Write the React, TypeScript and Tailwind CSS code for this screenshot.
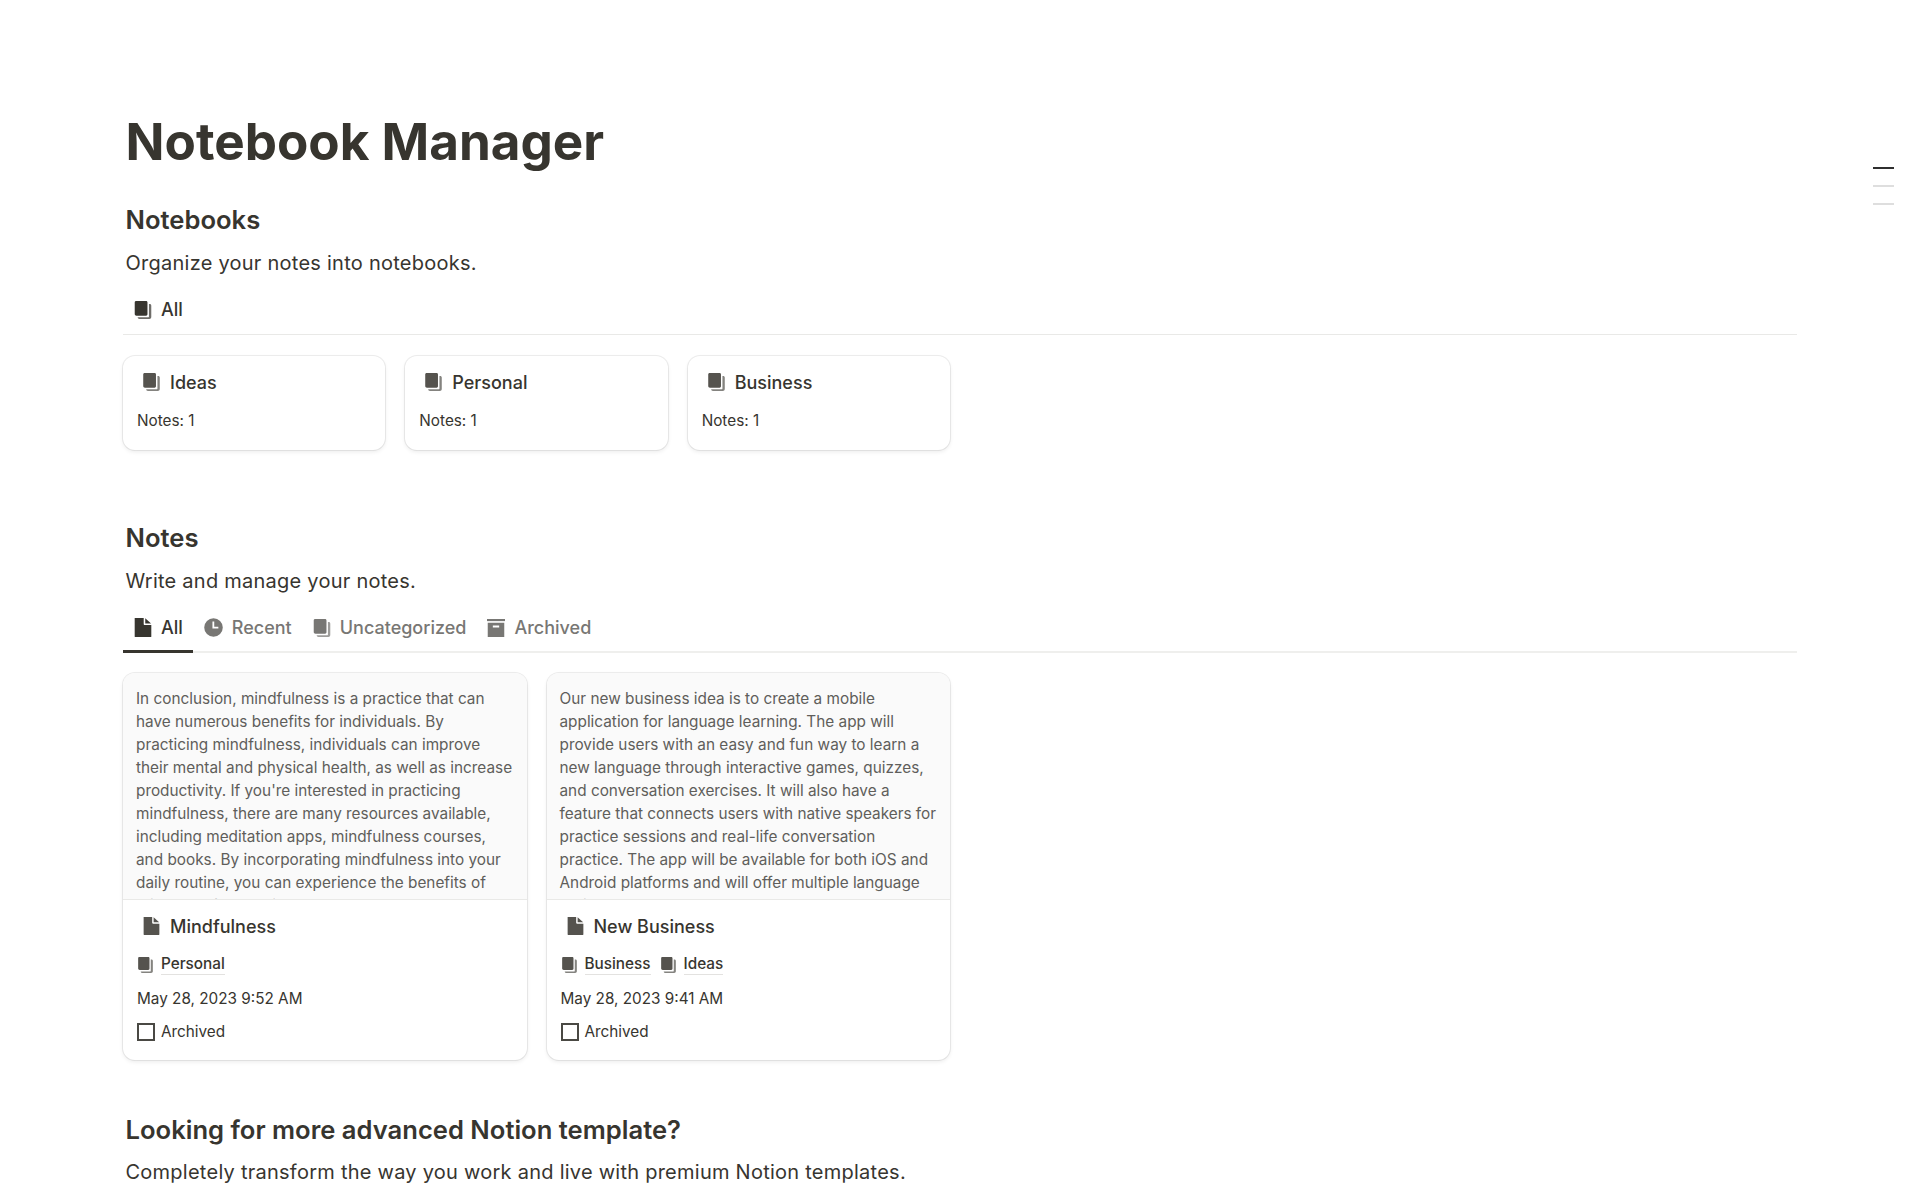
import type { ReactNode } from "react";

const INK = "#37352f";

function NotebookIcon({ className = "", fill = INK }: { className?: string; fill?: string }) {
  return (
    <svg viewBox="0 0 17 18.500" className={className} fill={fill}>
      <path d="M0 1.500C0 .6.6 0 1.500 0h10.200c.8 0 1.400.6 1.400 1.500v12.200c0 .8-.6 1.400-1.400 1.400H1.800C.8 15.100 0 14.400 0 13.400z" />
      <path
        d="M14.600 3h.9c.8 0 1.500.7 1.500 1.500v12c0 1.100-.9 2-2 2H4.800c-1 0-1.700-.6-1.800-1.700h11.100c.3 0 .5-.2.500-.5z"
        opacity="0.72"
      />
    </svg>
  );
}

function DocIcon({ className = "", fill = INK }: { className?: string; fill?: string }) {
  return (
    <svg viewBox="1.500 0.500 15.300 17.500" className={className} fill={fill}>
      <path d="M1.500 0.500h8.300v5.600c0 .5.4.9.9.9h6.100v10.500c0 .3-.2.5-.5.5H2c-.3 0-.5-.2-.5-.5z" />
      <path d="M11.200.7l5.400 4.900h-5.400z" />
    </svg>
  );
}

function ClockIcon({ className = "", fill = INK }: { className?: string; fill?: string }) {
  return (
    <svg viewBox="0 0 18 18" className={className} fill={fill}>
      <path
        fillRule="evenodd"
        d="M9 .2a8.800 8.800 0 1 1 0 17.600A8.800 8.800 0 0 1 9 .2zM8 3.400v6.500h5.600V8.300H9.700V3.400z"
      />
    </svg>
  );
}

function ArchiveIcon({ className = "", fill = INK }: { className?: string; fill?: string }) {
  return (
    <svg viewBox="0.500 1 17 17" className={className} fill={fill}>
      <rect x="0.500" y="1" width="17" height="2" />
      <path fillRule="evenodd" d="M1.200 4.500h15.600V18H1.200zM6 7.200v1.800h6V7.200z" />
    </svg>
  );
}

function Tab({
  icon,
  label,
  active = false,
  underline = false,
}: {
  icon: ReactNode;
  label: string;
  active?: boolean;
  underline?: boolean;
}) {
  return (
    <div
      className={`flex h-[39px] items-center gap-[9px] border-b-[3px] pr-[10px] pb-[9px] pl-[11px] text-[18px] font-medium ${
        underline ? "border-[#37352f]" : "border-transparent"
      } ${active ? "text-[#37352f]" : "text-[#787774]"}`}
    >
      {icon}
      <span>{label}</span>
    </div>
  );
}

function SectionHead({ title, text }: { title: string; text: string }) {
  return (
    <>
      <h2 className="pl-[2.500px] text-[25.600px] leading-[32px] font-semibold text-[#37352f]">{title}</h2>
      <p className="mt-[13px] pl-[2.500px] text-[20px] leading-[28px] tracking-[0.25px] text-[#37352f]">{text}</p>
    </>
  );
}

const cardShadow = "shadow-[0_0_0_1px_rgba(15,15,15,0.07),0_2px_4px_rgba(15,15,15,0.08)]";

function NotebookCard({ name }: { name: string }) {
  return (
    <div className={`h-[94px] rounded-[12px] bg-white pt-[14px] ${cardShadow}`}>
      <div className="flex h-6 items-center gap-[10px] pl-[20px] text-[18px] font-medium text-[#37352f]">
        <NotebookIcon className="h-[18px] w-[17px]" fill="#55534e" />
        {name}
      </div>
      <div className="mt-[15px] pl-[14px] text-[15.300px] leading-6 text-[#37352f]">Notes: 1</div>
    </div>
  );
}

function Tag({ name }: { name: string }) {
  return (
    <div className="flex items-center gap-[8px]">
      <NotebookIcon className="mt-[2px] h-[16px] w-[15px]" fill="#55534e" />
      <span className="border-b border-[#e3e2e0] text-[15.300px] leading-[21px] font-medium text-[#37352f]">{name}</span>
    </div>
  );
}

function NoteCard({
  preview,
  title,
  tags,
  date,
}: {
  preview: string;
  title: string;
  tags: string[];
  date: string;
}) {
  return (
    <div className={`h-[387px] overflow-hidden rounded-[12px] bg-white ${cardShadow}`}>
      <div className="h-[227px] overflow-hidden border-b border-[#e9e9e7] bg-[#fafafa] px-[13px] pt-[14px] text-[15.350px] leading-[23px] text-[#5f5e5b]">
        {preview}
      </div>
      <div className="mt-[14px] flex h-6 items-center gap-[10px] pl-[20px] text-[18px] font-medium text-[#37352f]">
        <DocIcon className="h-[18px] w-[17px]" fill="#55534e" />
        {title}
      </div>
      <div className="mt-[15px] flex items-center gap-[10px] pl-[15px]">
        {tags.map((t) => (
          <Tag key={t} name={t} />
        ))}
      </div>
      <div className="mt-[12px] pl-[14px] text-[15.300px] leading-6 text-[#37352f]">{date}</div>
      <div className="mt-[9px] flex items-center gap-[6px] pl-[14px] text-[15.300px] leading-6 text-[#37352f]">
        <span className="h-[18px] w-[18px] border-2 border-[#4a4944]" />
        Archived
      </div>
    </div>
  );
}

export default function App() {
  return (
    <div className="relative h-[1199px] overflow-hidden bg-white font-['Inter',sans-serif]">
      {/* page outline marks */}
      <div className="absolute top-[167px] right-[26px] flex w-[21px] flex-col gap-[16px]">
        <div className="h-[2px] bg-[#2f2f2f]" />
        <div className="h-[2px] bg-[#dedede]" />
        <div className="h-[2px] bg-[#dedede]" />
      </div>

      <div className="ml-[123px] w-[1674px] pt-[113px]">
        <h1 className="pl-[2.500px] text-[51.200px] leading-[56px] font-bold text-[#37352f]">Notebook Manager</h1>

        <div className="mt-[35px]">
          <SectionHead title="Notebooks" text="Organize your notes into notebooks." />
        </div>
        <div className="mt-[19px] flex h-[39px] border-b border-[#e9e9e7]">
          <Tab active icon={<NotebookIcon className="h-[18px] w-[18px]" />} label="All" />
        </div>
        <div className="mt-[21px] grid w-[827px] grid-cols-3 gap-[20px]">
          <NotebookCard name="Ideas" />
          <NotebookCard name="Personal" />
          <NotebookCard name="Business" />
        </div>

        <div className="mt-[72px]">
          <SectionHead title="Notes" text="Write and manage your notes." />
        </div>
        <div className="mt-[19px] flex h-[39px] border-b-2 border-[#efefed]">
          <Tab active underline icon={<DocIcon className="h-[19px] w-[18px]" />} label="All" />
          <Tab icon={<ClockIcon className="h-[19px] w-[19px]" fill="#787774" />} label="Recent" />
          <Tab icon={<NotebookIcon className="h-[18px] w-[18px]" fill="#787774" />} label="Uncategorized" />
          <Tab icon={<ArchiveIcon className="h-[18px] w-[18px]" fill="#787774" />} label="Archived" />
        </div>
        <div className="mt-[20px] grid w-[827px] grid-cols-2 gap-[20px]">
          <NoteCard
            preview="In conclusion, mindfulness is a practice that can have numerous benefits for individuals. By practicing mindfulness, individuals can improve their mental and physical health, as well as increase productivity. If you're interested in practicing mindfulness, there are many resources available, including meditation apps, mindfulness courses, and books. By incorporating mindfulness into your daily routine, you can experience the benefits of this powerful practice."
            title="Mindfulness"
            tags={["Personal"]}
            date="May 28, 2023 9:52 AM"
          />
          <NoteCard
            preview="Our new business idea is to create a mobile application for language learning. The app will provide users with an easy and fun way to learn a new language through interactive games, quizzes, and conversation exercises. It will also have a feature that connects users with native speakers for practice sessions and real-life conversation practice. The app will be available for both iOS and Android platforms and will offer multiple language options."
            title="New Business"
            tags={["Business", "Ideas"]}
            date="May 28, 2023 9:41 AM"
          />
        </div>

        <div className="mt-[54px]">
          <h2 className="pl-[2.500px] text-[25.600px] leading-[32px] font-semibold text-[#37352f]">
            Looking for more advanced Notion template?
          </h2>
          <p className="mt-[12px] pl-[2.500px] text-[20px] leading-[28px] tracking-[0.25px] text-[#37352f]">
            Completely transform the way you work and live with premium Notion templates.
          </p>
        </div>
      </div>
    </div>
  );
}
